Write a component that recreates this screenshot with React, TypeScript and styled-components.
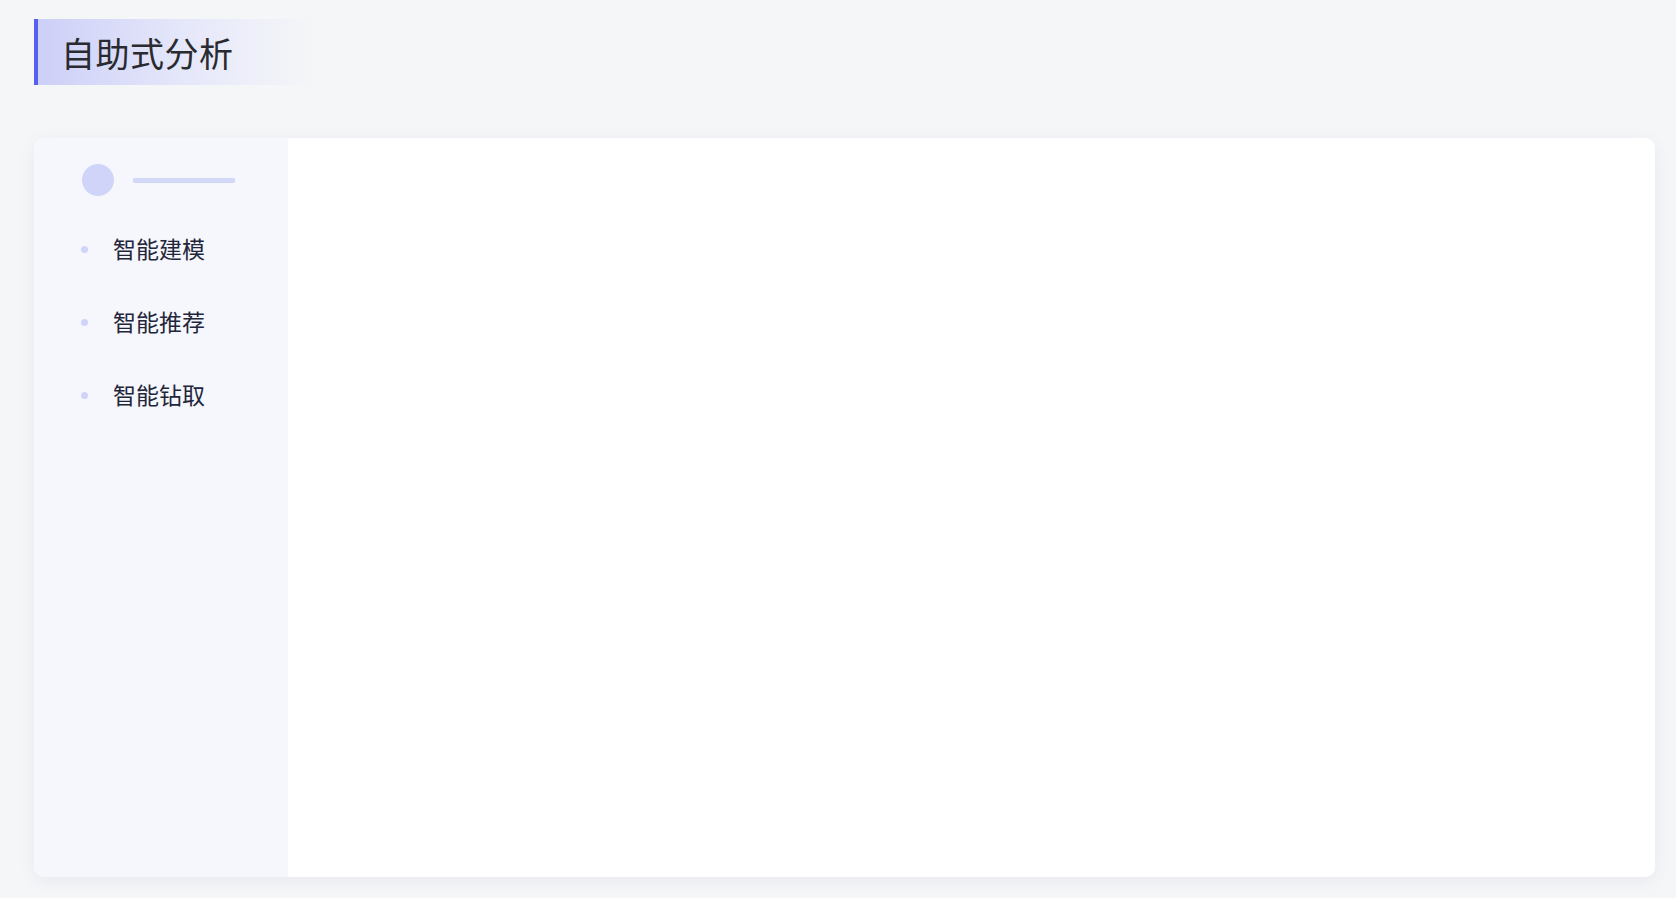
import styled, { createGlobalStyle } from 'styled-components';

const GlobalStyle = createGlobalStyle`
  html, body {
    margin: 0;
    padding: 0;
    background: #f5f6f8;
    font-family: 'Noto Sans CJK SC', 'Noto Sans', sans-serif;
  }
  * { box-sizing: border-box; }
`;

const Page = styled.div`
  height: 100vh;
  display: flex;
  flex-direction: column;
  padding: 19px 21px 21px 34px;
`;

const TitleBar = styled.div`
  width: 280px;
  height: 66px;
  display: flex;
  align-items: center;
  padding-left: 23px;
  border-left: 4px solid #5560f0;
  background: linear-gradient(90deg, #cdd0f7 0%, #e6e8fa 55%, rgba(245, 246, 248, 0) 100%);
`;

const Title = styled.h1`
  margin: 0;
  font-size: 34px;
  font-weight: 400;
  color: #2a2b30;
  letter-spacing: 0.5px;
`;

const Card = styled.div`
  flex: 1;
  margin-top: 53px;
  display: flex;
  background: #fff;
  border-radius: 10px;
  overflow: hidden;
  box-shadow: 0 4px 18px rgba(30, 40, 80, 0.06);
`;

const Sidebar = styled.aside`
  width: 254px;
  flex-shrink: 0;
  background: #f6f7fc;
  padding: 26px 0 0 48px;
`;

const Brand = styled.div`
  display: flex;
  align-items: center;
  gap: 19px;
  height: 32px;
  margin-bottom: 35px;
`;

const Avatar = styled.div`
  width: 32px;
  height: 32px;
  border-radius: 50%;
  background: #d0d4f8;
`;

const Line = styled.div`
  width: 102px;
  height: 5px;
  border-radius: 1px;
  background: #d4d8f7;
`;

const Menu = styled.ul`
  list-style: none;
  margin: 0;
  padding: 0;
  display: flex;
  flex-direction: column;
  gap: 39px;
`;

const MenuItem = styled.li`
  display: flex;
  align-items: center;
  height: 34px;
  gap: 25px;
  font-size: 23px;
  color: #23263b;
  cursor: pointer;
`;

const Dot = styled.span`
  width: 7px;
  height: 7px;
  border-radius: 50%;
  background: #d0d4f8;
  margin-left: -1px;
  margin-top: 2px;
`;

const Content = styled.main`
  flex: 1;
  background: #fff;
`;

const items = ['智能建模', '智能推荐', '智能钻取'];

export default function App() {
  return (
    <>
      <GlobalStyle />
      <Page>
        <TitleBar>
          <Title>自助式分析</Title>
        </TitleBar>
        <Card>
          <Sidebar>
            <Brand>
              <Avatar />
              <Line />
            </Brand>
            <Menu>
              {items.map((item) => (
                <MenuItem key={item}>
                  <Dot />
                  {item}
                </MenuItem>
              ))}
            </Menu>
          </Sidebar>
          <Content />
        </Card>
      </Page>
    </>
  );
}
